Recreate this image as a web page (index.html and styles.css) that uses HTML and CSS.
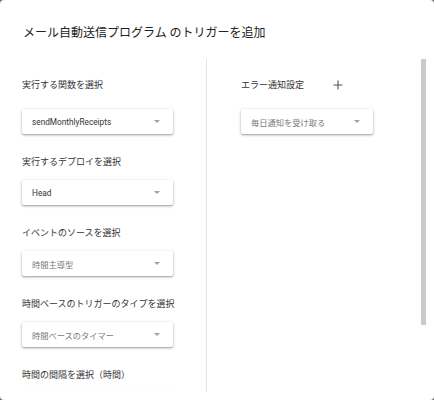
FILE: index.html
```html
<!DOCTYPE html>
<html lang="ja">
<head>
<meta charset="utf-8">
<link rel="stylesheet" href="styles.css">
</head>
<body>
<div class="dialog">
  <h1 class="title">メール自動送信プログラム のトリガーを追加</h1>
  <div class="content">
    <div class="col col-left">
      <div class="section">
        <div class="head"><span class="label">実行する関数を選択</span></div>
        <div class="select w-left"><span class="val">sendMonthlyReceipts</span><span class="arrow"></span></div>
      </div>
      <div class="section">
        <div class="label">実行するデプロイを選択</div>
        <div class="select w-left"><span class="val">Head</span><span class="arrow"></span></div>
      </div>
      <div class="section">
        <div class="label">イベントのソースを選択</div>
        <div class="select w-left"><span class="val muted">時間主導型</span><span class="arrow"></span></div>
      </div>
      <div class="section">
        <div class="label">時間ベースのトリガーのタイプを選択</div>
        <div class="select w-left"><span class="val muted">時間ベースのタイマー</span><span class="arrow"></span></div>
      </div>
      <div class="section">
        <div class="label">時間の間隔を選択（時間）</div>
        <div class="select w-left"><span class="val"></span><span class="arrow"></span></div>
      </div>
    </div>
    <div class="col col-right">
      <div class="section">
        <div class="head">
          <span class="label">エラー通知設定</span>
          <span class="plus"><svg width="10" height="10" viewBox="0 0 10 10"><path d="M5 0.5V9.5M0.5 5H9.5" stroke="#555" stroke-width="1.1" fill="none"/></svg></span>
        </div>
        <div class="select w-right"><span class="val muted">毎日通知を受け取る</span><span class="arrow"></span></div>
      </div>
    </div>
  </div>
  <div class="scrollbar"></div>
</div>
</body>
</html>
```

FILE: styles.css
```css
html, body {
  margin: 0;
  padding: 0;
}
body {
  background: #6a6a6a;
  font-family: Roboto, "Noto Sans CJK JP", sans-serif;
}
.dialog {
  position: relative;
  width: 434px;
  height: 400px;
  background: #ffffff;
  border-radius: 4px;
  overflow: hidden;
}
.title {
  margin: 0;
  padding: 25px 0 0 23px;
  height: 16px;
  font-size: 12px;
  line-height: 16px;
  font-weight: 400;
  color: #222;
  white-space: nowrap;
}
.content {
  margin-top: 18px;
  height: 333px;
  display: flex;
  overflow: hidden;
}
.col {
  padding-top: 14px;
  display: flex;
  flex-direction: column;
}
.col-left {
  width: 184px;
  padding-left: 22px;
  border-right: 1px solid #e4e4e4;
}
.col-right {
  padding-left: 34px;
}
.section {
  display: flex;
  flex-direction: column;
  margin-bottom: 22px;
}
.head {
  height: 24px;
  display: flex;
  align-items: center;
  margin-bottom: 12px;
}
.label {
  font-size: 9px;
  line-height: 12px;
  color: #333;
  white-space: nowrap;
}
.section > .label {
  margin-bottom: 12px;
}
.plus {
  display: flex;
  margin-left: 29px;
}
.select {
  height: 25px;
  box-sizing: border-box;
  display: flex;
  align-items: center;
  justify-content: space-between;
  padding: 0 13px 0 10px;
  background: #fff;
  border-radius: 2px;
  box-shadow: 0 1px 3px rgba(0, 0, 0, 0.32), 0 1px 1px rgba(0, 0, 0, 0.12);
}
.w-left {
  width: 151px;
}
.w-right {
  width: 132px;
}
.val {
  font-size: 8.25px;
  color: #333;
  white-space: nowrap;
}
.val.muted {
  color: #7a7a7a;
}
.arrow {
  width: 0;
  height: 0;
  border-left: 3px solid transparent;
  border-right: 3px solid transparent;
  border-top: 3px solid #a0a0a0;
}
.scrollbar {
  position: absolute;
  left: 421px;
  top: 59px;
  width: 5px;
  height: 266px;
  background: #cacaca;
}
```
